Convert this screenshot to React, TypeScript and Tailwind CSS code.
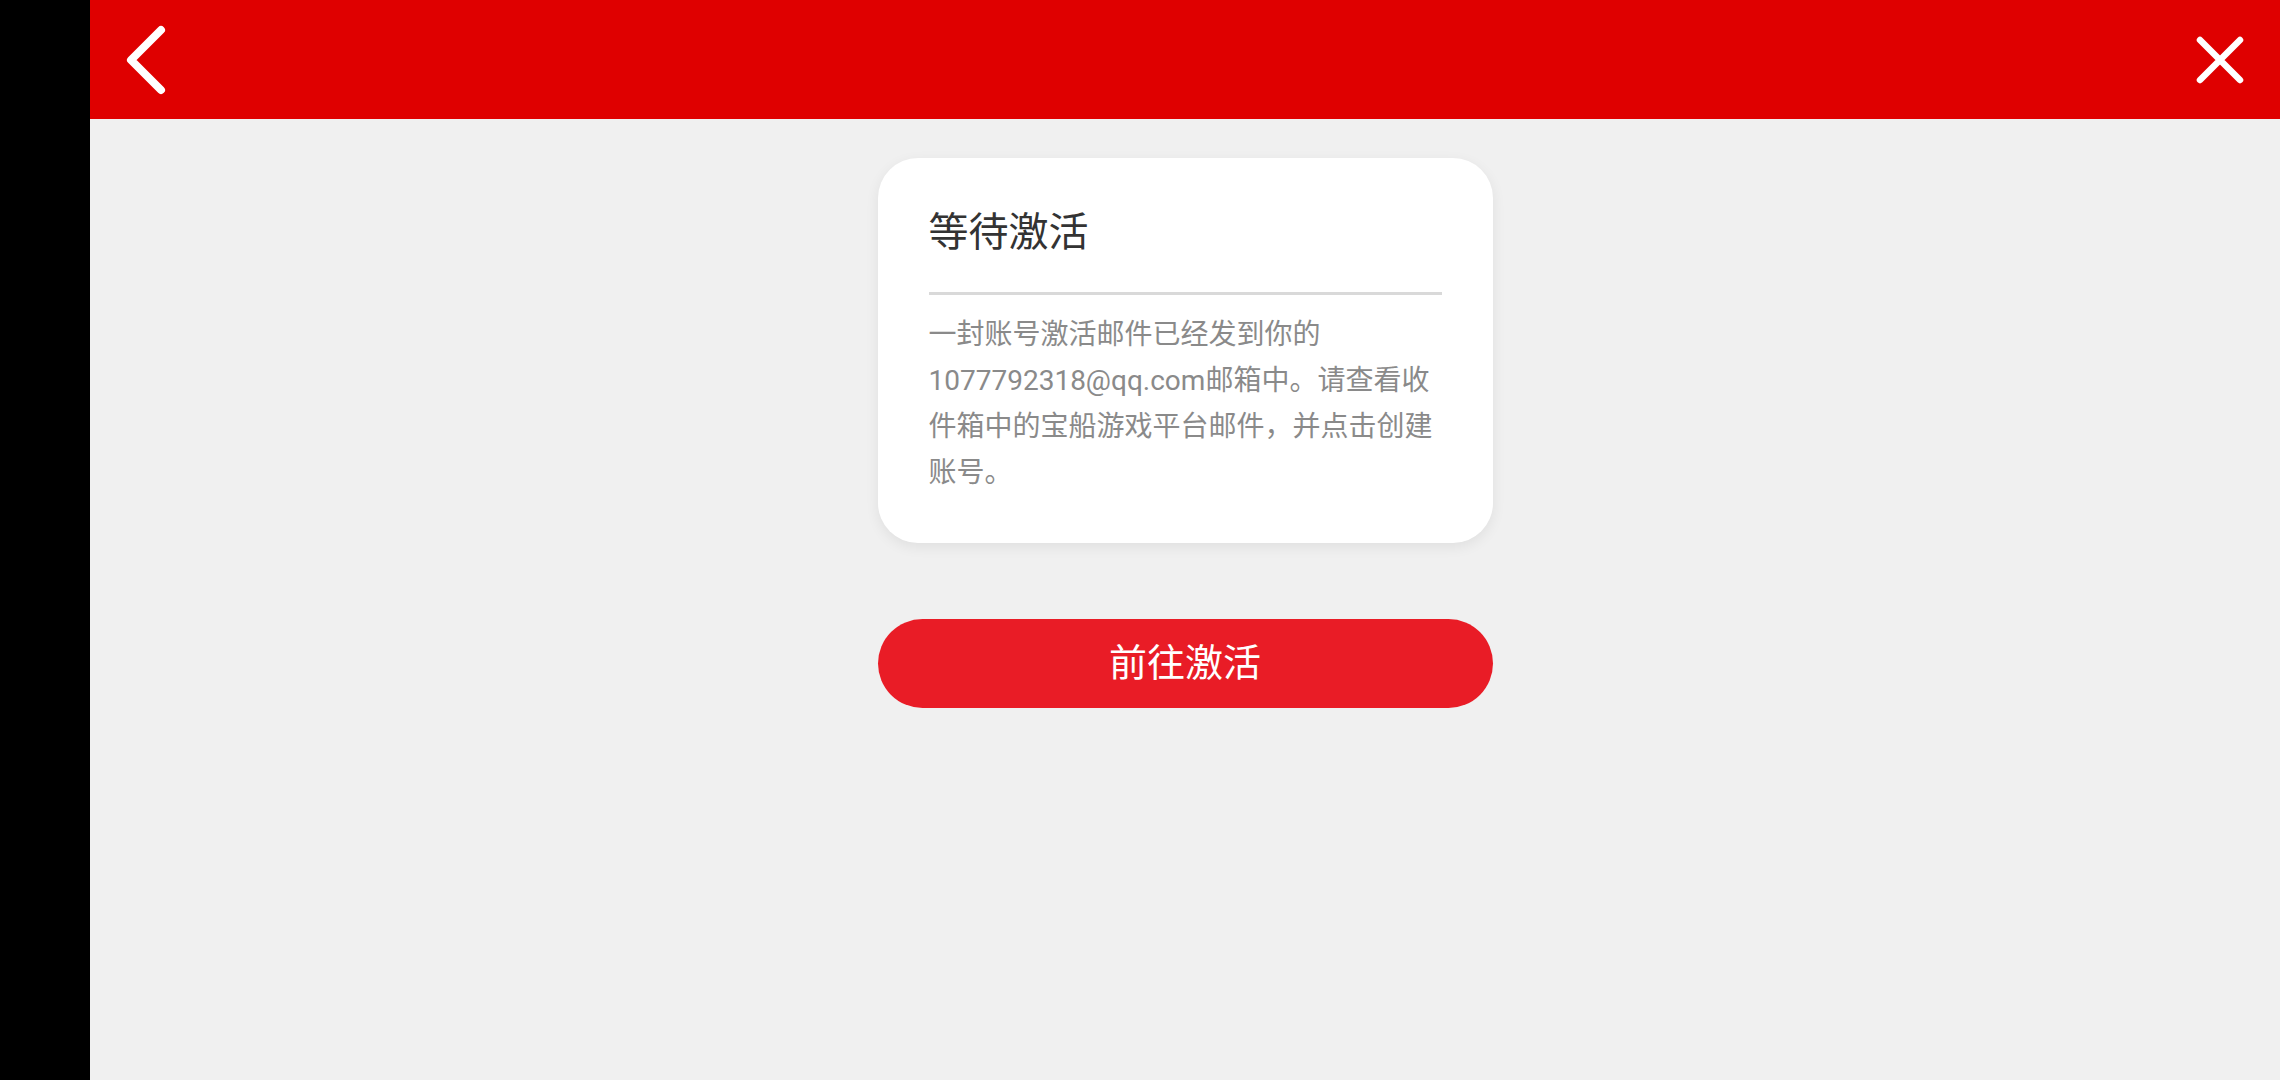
import React from 'react';

const font = { fontFamily: '"Roboto", "Noto Sans CJK SC", sans-serif' };

function BackIcon() {
  return (
    <svg width="40" height="70" viewBox="0 0 40 70" fill="none">
      <path d="M35 5 L5 35 L35 65" stroke="white" strokeWidth="8" strokeLinecap="round" strokeLinejoin="round" />
    </svg>
  );
}

function CloseIcon() {
  return (
    <svg width="48" height="48" viewBox="0 0 48 48" fill="none">
      <path d="M4 4 L44 44 M44 4 L4 44" stroke="white" strokeWidth="6.5" strokeLinecap="round" />
    </svg>
  );
}

export default function App() {
  return (
    <div className="flex min-h-[1080px] w-[2280px] bg-black" style={font}>
      {/* left system bar */}
      <div className="w-[90px] shrink-0 bg-black" />
      <div className="flex flex-1 flex-col bg-[#f0f0f0]">
        {/* Header */}
        <header className="flex h-[119px] items-center justify-between bg-[#df0000] pl-[36px] pr-[36px]">
          <BackIcon />
          <CloseIcon />
        </header>
        {/* Content */}
        <main className="flex flex-col items-center pt-[39px]">
          <div className="w-[615px] rounded-[40px] bg-white px-[51px] pt-[47px] pb-[47px] shadow-[0_4px_14px_rgba(0,0,0,0.07)]">
            <h1 className="text-[40px] leading-[56px] font-normal text-[#333333]">等待激活</h1>
            <div className="mt-[31px] h-[3px] bg-[#d9d9d9]" />
            <p className="mt-[17px] text-[28px] leading-[46px] text-[#8a8a8a]">
              一封账号激活邮件已经发到你的1077792318@qq.com邮箱中。请查看收件箱中的宝船游戏平台邮件，并点击创建账号。
            </p>
          </div>
          <button className="mt-[76px] flex h-[89px] w-[615px] items-center justify-center rounded-full bg-[#e91c26] text-[38px] text-white">
            前往激活
          </button>
        </main>
      </div>
    </div>
  );
}
